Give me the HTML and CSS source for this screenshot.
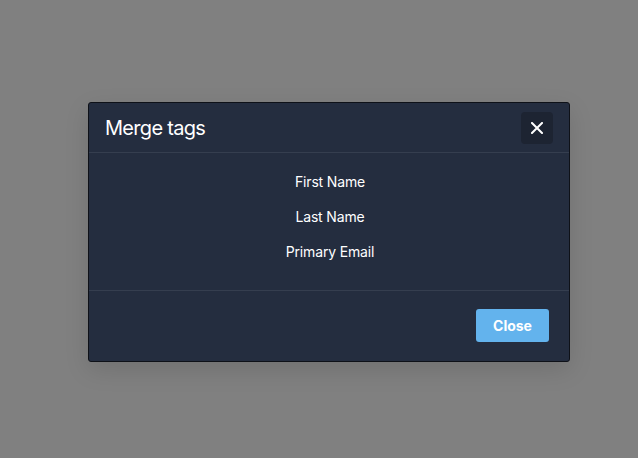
FILE: index.html
```html
<!DOCTYPE html>
<html>
<head>
<meta charset="utf-8">
<link rel="stylesheet" href="styles.css">
</head>
<body>
<div class="backdrop">
  <div class="modal">
    <header class="modal-header">
      <h2 class="modal-title">Merge tags</h2>
      <button class="icon-btn" aria-label="Close">
        <svg width="12" height="12" viewBox="0 0 12 12"><path d="M1 1L11 11M11 1L1 11" stroke="#fff" stroke-width="2" stroke-linecap="square"/></svg>
      </button>
    </header>
    <div class="modal-body">
      <div class="tag">First Name</div>
      <div class="tag">Last Name</div>
      <div class="tag">Primary Email</div>
    </div>
    <footer class="modal-footer">
      <button class="btn-primary">Close</button>
    </footer>
  </div>
</div>
</body>
</html>
```
FILE: styles.css
```css
html, body {
  margin: 0;
  padding: 0;
  height: 100%;
}
body {
  background: #808080;
  font-family: Inter, "Liberation Sans", sans-serif;
  color: #fff;
}
.backdrop {
  height: 100%;
  display: flex;
  justify-content: flex-start;
  padding: 102px 0 0 88px;
  box-sizing: border-box;
}
.modal {
  width: 482px;
  height: 260px;
  box-sizing: border-box;
  background: #242d3f;
  border: 1px solid #0e1118;
  border-radius: 3px;
  box-shadow: 0 8px 24px rgba(0,0,0,0.12);
  display: flex;
  flex-direction: column;
}
.modal-header {
  height: 50px;
  box-sizing: border-box;
  display: flex;
  align-items: center;
  justify-content: space-between;
  padding: 0 16px 0 16px;
  border-bottom: 1px solid #353e4f;
}
.modal-title {
  margin: 0;
  font-size: 20px;
  font-weight: 400;
  letter-spacing: -0.7px;
}
.icon-btn {
  width: 32px;
  height: 32px;
  border: none;
  border-radius: 4px;
  background: #1d2432;
  display: flex;
  align-items: center;
  justify-content: center;
  padding: 0;
  margin-top: 1px;
}
.modal-body {
  height: 138px;
  box-sizing: border-box;
  padding-top: 11px;
  display: flex;
  flex-direction: column;
  align-items: center;
  border-bottom: 1px solid #353e4f;
}
.tag {
  height: 35px;
  line-height: 35px;
  font-size: 14px;
  font-weight: 400;
  letter-spacing: -0.15px;
  padding-left: 2px;
}
.modal-footer {
  flex: 1;
  box-sizing: border-box;
  display: flex;
  justify-content: flex-end;
  align-items: flex-start;
  padding: 18px 20px 0 0;
}
.btn-primary {
  width: 73px;
  height: 33px;
  border: none;
  border-radius: 3px;
  background: #63b3ed;
  color: #fff;
  font-family: Inter, "Liberation Sans", sans-serif;
  font-size: 14px;
  font-weight: 700;
}
```
